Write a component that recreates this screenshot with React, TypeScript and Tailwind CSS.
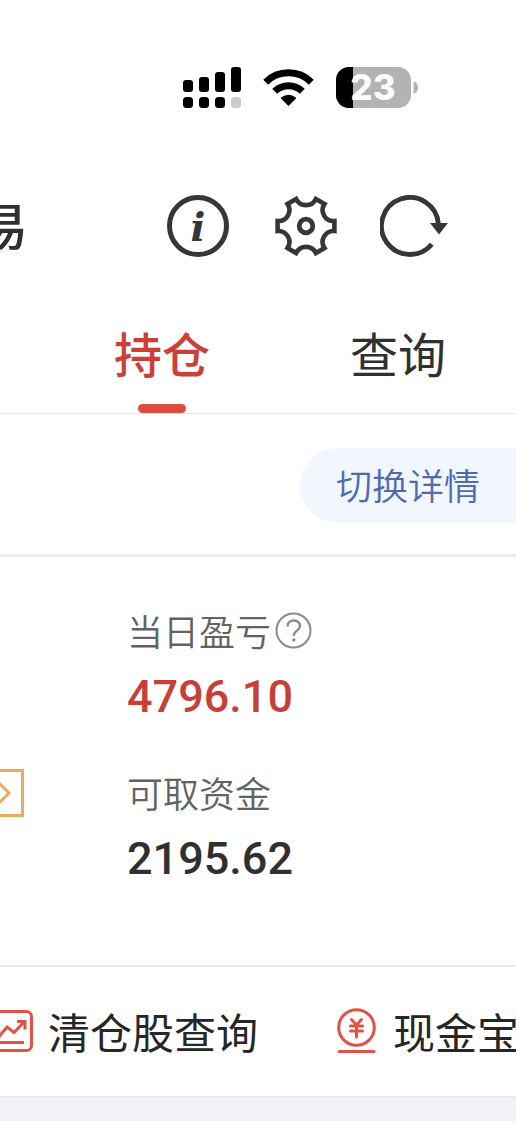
import React from "react";

const SignalIcon = () => (
  <svg className="h-[41px] w-[58px]" viewBox="0 0 58 41" aria-hidden="true">
    <rect x="0" y="13" width="10" height="12" rx="3" />
    <rect x="16" y="10" width="10" height="15" rx="3" />
    <rect x="32" y="5" width="10" height="20" rx="3" />
    <rect x="48" y="0" width="10" height="25" rx="3" />
    <rect x="0" y="30" width="10" height="11" rx="3.5" />
    <rect x="16" y="30" width="10" height="11" rx="3.5" />
    <rect x="32" y="30" width="10" height="11" rx="3.5" />
    <rect x="48" y="30" width="10" height="11" rx="3.5" fill="#cbcbcb" />
  </svg>
);

const WifiIcon = () => (
  <svg className="h-[41px] w-[51px]" viewBox="0 0 51 41" aria-hidden="true">
    <g fill="none" stroke="#000" strokeWidth="7">
      <path d="M2.7 15.2A32.5 32.5 0 0 1 48.3 15.2" />
      <path d="M11.7 24.3A19.7 19.7 0 0 1 39.3 24.3" />
    </g>
    <path d="M25.5 39L18 31.6Q17.6 31 18.2 30.6Q25.5 25 32.8 30.6Q33.4 31 33 31.6Z" />
  </svg>
);

const BatteryIcon = () => (
  <svg
    className="h-[41px] w-[82px]"
    viewBox="0 0 82 41"
    role="img"
    aria-label="23%"
  >
    <defs>
      <clipPath id="battery">
        <rect width="75" height="41" rx="13" />
      </clipPath>
    </defs>
    <g clipPath="url(#battery)">
      <rect width="75" height="41" fill="#b3b3b3" />
      <rect width="17" height="41" fill="#000" />
    </g>
    <path d="M77.5 14Q82 16 82 20.5Q82 25 77.5 27Z" fill="#b3b3b3" />
    <text
      x="37"
      y="33"
      textAnchor="middle"
      fill="#fff"
      className="font-['Inter',sans-serif] text-[35px] font-extrabold"
    >
      23
    </text>
  </svg>
);

const InfoIcon = () => (
  <svg className="h-[62px] w-[62px]" viewBox="0 0 62 62" aria-hidden="true">
    <circle
      cx="31"
      cy="31"
      r="28.5"
      fill="none"
      stroke="#363636"
      strokeWidth="5"
    />
    <text
      x="31"
      y="46"
      textAnchor="middle"
      fill="#363636"
      className="font-['DejaVu_Serif',serif] text-[39px] font-bold italic"
    >
      i
    </text>
  </svg>
);

const GearIcon = () => (
  <svg
    className="h-[62px] w-[62px]"
    viewBox="0 0 62 62"
    fill="none"
    stroke="#363636"
    strokeWidth="4.6"
    aria-hidden="true"
  >
    <path d="M59.4 26V36A11 11 0 0 0 49.5 53.1L40.9 58.1A11 11 0 0 0 21.1 58.1L12.5 53.1A11 11 0 0 0 2.6 36V26A11 11 0 0 0 12.5 8.9L21.1 3.9A11 11 0 0 0 40.9 3.9L49.5 8.9A11 11 0 0 0 59.4 26Z" />
    <circle cx="31" cy="31" r="6.8" strokeWidth="4.8" />
  </svg>
);

const RefreshIcon = () => (
  <svg className="h-[62px] w-[68px]" viewBox="0 0 68 62" aria-hidden="true">
    <path
      d="M51.8 49.3A28.5 28.5 0 1 1 58.4 29"
      fill="none"
      stroke="#363636"
      strokeWidth="4.8"
    />
    <path d="M50 28H68L59 39.5Z" fill="#363636" />
  </svg>
);

const HelpIcon = () => (
  <svg
    className="h-[37px] w-[37px]"
    viewBox="0 0 37 37"
    fill="none"
    stroke="#8a8a8a"
    strokeWidth="2"
    aria-hidden="true"
  >
    <circle cx="18.5" cy="18.5" r="17" />
    <path
      d="M12.5 14.5C12.5 6.5 25 6.5 25 14C25 18.5 18.8 18.5 18.8 24"
      strokeWidth="2.4"
    />
    <circle cx="18.8" cy="28" r="1.7" fill="#8a8a8a" stroke="none" />
  </svg>
);

const TrendIcon = () => (
  <svg
    className="h-[42px] w-[42px]"
    viewBox="0 0 42 42"
    fill="none"
    stroke="#e05246"
    strokeWidth="3"
    aria-hidden="true"
  >
    <rect x="1.5" y="1.5" width="39" height="39" rx="5" />
    <path d="M6 29L16 17L23 22.5L33 12M26 11.5H34V19.5" />
    <path d="M7 32.5H33" />
  </svg>
);

const CashIcon = () => (
  <svg
    className="h-[45px] w-[39px]"
    viewBox="0 0 39 45"
    fill="none"
    stroke="#e05246"
    strokeWidth="3"
    strokeLinecap="round"
    aria-hidden="true"
  >
    <circle cx="19.5" cy="19.5" r="17.8" />
    <path d="M14.5 11.5L19.5 17L24.5 11.5M13.5 18H25.5M13.5 23H25.5M19.5 17V29" />
    <path d="M2 43.5H37" />
  </svg>
);

interface Metric {
  name: string;
  value: string;
  color: string;
  help?: boolean;
}

const metrics: Metric[] = [
  {
    name: "当日盈亏",
    value: "4796.10",
    color: "text-[#c83f38]",
    help: true,
  },
  { name: "可取资金", value: "2195.62", color: "text-[#303030]" },
];

const App = () => {
  return (
    <div className="w-full overflow-hidden bg-white font-['Noto_Sans_CJK_SC',sans-serif] text-[#303030]">
      <div className="flex items-center justify-end pt-[67px] pr-[98px]">
        <SignalIcon />
        <div className="ml-[22px]">
          <WifiIcon />
        </div>
        <div className="ml-[22px]">
          <BatteryIcon />
        </div>
      </div>

      <header className="flex items-start justify-between pt-[87px] pr-[68px]">
        <h1 className="-ml-[22px] w-12 text-[50px] leading-[56px] font-medium">
          易
        </h1>
        <div className="flex items-center">
          <button type="button" aria-label="信息">
            <InfoIcon />
          </button>
          <button type="button" aria-label="设置" className="ml-[46px]">
            <GearIcon />
          </button>
          <button type="button" aria-label="刷新" className="ml-[43px]">
            <RefreshIcon />
          </button>
        </div>
      </header>

      <nav className="flex justify-end border-b border-[#e8e8e8] pt-16 pr-[70px] text-5xl">
        <button
          type="button"
          className="flex flex-col items-center font-medium text-[#cb4038]"
        >
          <span className="leading-[62px]">持仓</span>
          <span className="mt-[21px] h-[9px] w-12 rounded-full bg-[#dc4d40]" />
        </button>
        <button type="button" className="ml-[140px] flex flex-col">
          <span className="leading-[62px]">查询</span>
        </button>
      </nav>

      <div className="flex justify-end border-b-3 border-[#ebebeb] pt-[34px] pb-[31px]">
        <button
          type="button"
          className="rounded-l-full bg-[#f2f6fe] px-9 pb-[2px] text-4xl leading-[73px] font-[350] text-[#4f6bb0]"
        >
          切换详情
        </button>
      </div>

      <div className="flex border-b-2 border-[#ebebeb] pt-[50px] pb-[74px]">
        <div className="flex w-[127px] flex-col pt-[162px]">
          <button
            type="button"
            aria-label="展开"
            className="flex h-12 w-6 items-center border-3 border-l-0 border-[#e9ac5c]"
          >
            <svg
              className="h-6 w-3"
              viewBox="0 0 12 24"
              fill="none"
              stroke="#e9ac5c"
              strokeWidth="3"
            >
              <path d="M-1 2L9 12L-1 22" />
            </svg>
          </button>
        </div>
        <dl className="flex flex-col gap-10">
          {metrics.map((item) => (
            <div key={item.name}>
              <dt className="flex items-center gap-1 text-4xl leading-[46px] font-[350] text-[#626262]">
                {item.name}
                {item.help && (
                  <button type="button" aria-label="说明">
                    <HelpIcon />
                  </button>
                )}
              </dt>
              <dd
                className={`mt-3 font-['Roboto',sans-serif] text-[45px] leading-[64px] font-medium ${item.color}`}
              >
                {item.value}
              </dd>
            </div>
          ))}
        </dl>
      </div>

      <div className="flex items-center pb-[2px] text-[42px] leading-[127px] whitespace-nowrap text-[#262626]">
        <a href="#history" className="-ml-[9px] flex items-center gap-[15px]">
          <TrendIcon />
          清仓股查询
        </a>
        <a href="#cash" className="ml-[79px] flex items-center gap-[17px]">
          <CashIcon />
          现金宝
        </a>
      </div>

      <div className="h-[25px] border-t border-[#e8e9ec] bg-[#f1f2f7]" />
    </div>
  );
};

export default App;
